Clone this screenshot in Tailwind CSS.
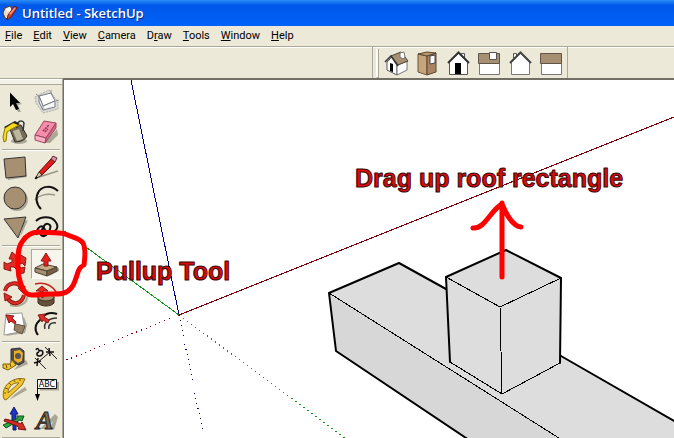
<!DOCTYPE html>
<html lang="en">

<head>
    <meta charset="UTF-8" />
    <meta name="viewport" content="width=device-width, initial-scale=1.0" />
    <title>Untitled - SketchUp</title>
    <script src="https://cdn.jsdelivr.net/npm/@tailwindcss/browser@4"></script>
</head>

<body>
    <div class="relative flex h-screen flex-col overflow-hidden bg-[#ece9d8] font-[Roboto,sans-serif] text-black">
        <!-- Title bar -->
        <header class="flex h-[26px] shrink-0 items-center gap-1 bg-linear-to-b from-[#2b8cfb] via-[#0058e8] via-20% to-[#0062fa] pl-0.5">
            <svg class="h-4 w-4" viewBox="0 0 16 16">
                <path d="M1 8 3 3 8 1 10 4 6 14 3 13Z" fill="#f2dcc0" stroke="#5b3a30" />
                <path d="M4 4 8 2 9 5 5 7Z" fill="#fff" />
                <path d="M5 15 6 10 13 1 15 3 9 12Z" fill="#d8432a" stroke="#6d1710" />
                <path d="M8 9 13 3" stroke="#ff9a7a" stroke-width="1.5" />
            </svg>
            <h1 class="font-['Open_Sans',sans-serif] text-[13px] leading-5 font-semibold text-white [text-shadow:1px_1px_#0a2a8c]">Untitled - SketchUp</h1>
        </header>

        <!-- Menu -->
        <nav class="flex h-5 shrink-0 items-center gap-[11px] pl-[5px] text-[11px] leading-4">
            <button><u>F</u>ile</button>
            <button><u>E</u>dit</button>
            <button><u>V</u>iew</button>
            <button><u>C</u>amera</button>
            <button>D<u>r</u>aw</button>
            <button><u>T</u>ools</button>
            <button><u>W</u>indow</button>
            <button><u>H</u>elp</button>
        </nav>

        <!-- Views toolbar -->
        <div class="flex h-8 shrink-0 border-t border-[#aca899] shadow-[inset_0_1px_#fff]">
            <div class="w-[373px] border-r border-[#aca899]"></div>
            <div class="mt-0.5 mr-0.5 ml-[3px] w-[3px] border-r border-b border-[#aca899] border-l border-l-white bg-[#f8f7f1]"></div>
            <div class="flex border-r border-[#aca899]">
                <button aria-label="Iso" class="w-[31px]">
                    <svg class="h-[30px] w-[31px]" viewBox="0 0 31 30">
                        <path d="M6 14 11 9 16 17 16 27 6 22Z" fill="#fff" stroke="#555" />
                        <path d="M16 17 26 13 26 22 16 27Z" fill="#fff" stroke="#777" />
                        <path d="M9 15 12 16 12 24 9 23Z" />
                        <path d="M10 8 20 4 27 13 17 17Z" fill="#a78f72" stroke="#4a4238" />
                        <path d="M4 14 10 8 17 18" fill="none" stroke="#333" stroke-width="1.500" />
                        <path d="M19 5 23 4 24 9 22 11 19 9Z" fill="#fff" stroke="#777" />
                    </svg>
                </button>
                <button aria-label="Top" class="w-[31px]">
                    <svg class="h-[30px] w-[31px]" viewBox="0 0 31 30">
                        <path d="M6 6 15 8 15 27 6 24Z" fill="#c7a47b" stroke="#6b5439" />
                        <path d="M15 8 24 5 24 24 15 27Z" fill="#a78563" stroke="#5a4630" />
                        <path d="M6 6 15 4 24 5 15 8Z" fill="#b8966f" stroke="#5a4630" />
                        <path d="M18 8 23 7 23 15 18 16Z" fill="#fff" stroke="#444" />
                    </svg>
                </button>
                <button aria-label="Front" class="w-[31px]">
                    <svg class="h-[30px] w-[31px]" viewBox="0 0 31 30">
                        <path d="M18.500 11V5.500H21.500V13Z" fill="#fff" stroke="#555" />
                        <path d="M6.500 14 15.500 5 24.500 14V26.500H6.500Z" fill="#fff" stroke="#555" />
                        <path d="M5 15 15.500 4.500 26 15" fill="none" stroke="#333" stroke-width="2" />
                        <path d="M12 15H18V26H12Z" />
                    </svg>
                </button>
                <button aria-label="Right" class="w-[31px]">
                    <svg class="h-[30px] w-[31px]" viewBox="0 0 31 30">
                        <path d="M5.500 14.500H25.500V26.500H5.500Z" fill="#fff" stroke="#777" />
                        <path d="M4.500 5.500H25.500V15.500H4.500Z" fill="#a78f72" stroke="#5f5548" />
                        <path d="M15.500 4.500H22.500V11.500H15.500Z" fill="#fff" stroke="#555" />
                    </svg>
                </button>
                <button aria-label="Back" class="w-[31px]">
                    <svg class="h-[30px] w-[31px]" viewBox="0 0 31 30">
                        <path d="M8.500 13V5.500H11.500V11Z" fill="#fff" stroke="#555" />
                        <path d="M6.500 14 15.500 5 24.500 14V26.500H6.500Z" fill="#fff" stroke="#777" />
                        <path d="M5 15 15.500 4.500 26 15" fill="none" stroke="#444" stroke-width="2" />
                    </svg>
                </button>
                <button aria-label="Left" class="w-[31px]">
                    <svg class="h-[30px] w-[31px]" viewBox="0 0 31 30">
                        <path d="M5.500 14.500H25.500V26.500H5.500Z" fill="#fff" stroke="#777" />
                        <path d="M4.500 5.500H25.500V15.500H4.500Z" fill="#a78f72" stroke="#5f5548" />
                    </svg>
                </button>
            </div>
        </div>

        <div class="flex min-h-0 flex-1">
            <!-- Tools -->
            <aside class="flex w-[63px] shrink-0 flex-col border-t border-r border-[#aca899]">
                <div class="h-[6px] shrink-0 border-t border-b border-t-white border-b-[#aca899] bg-[#f4f2e8]"></div>
                <div class="grid shrink-0 grid-cols-2 pt-0.5">
                    <button aria-label="Select" class="h-[30px]">
                        <svg class="h-[30px] w-[31px]" viewBox="0 0 31 30">
                            <path d="M14 10 22 17 18 18 21 25 18 25 14 18Z" fill="#aaa797" />
                            <path d="M10 5.500V20L13 17 16 23 19 22 16 16H20Z" />
                        </svg>
                    </button>
                    <button aria-label="Make Component" class="h-[30px]">
                        <svg class="h-[30px] w-[31px]" viewBox="0 0 31 30">
                            <path d="M4 10 18 3 27 15 27 22 12 26 5 16Z" fill="#dddbd5" stroke="#aaa9a5" stroke-dasharray="2 1" />
                            <path d="M8 9 20 6 24 14 12 19Z" fill="#fff" stroke="#777785" />
                            <path d="M8 9V15L12 23 24 20V14L12 19Z" fill="#f7f7fa" stroke="#777785" />
                            <path d="M12 19V23M5 7 9 10M20 3 20 6M25 14 28 13" stroke="#8d8d98" />
                        </svg>
                    </button>
                    <button aria-label="Paint Bucket" class="h-[30px]">
                        <svg class="h-[30px] w-[31px]" viewBox="0 0 31 30">
                            <ellipse cx="19" cy="24" rx="8" ry="3" fill="#aaa797" />
                            <path d="M9 10 21 8 27 19 Q24 25 15 25Z" fill="#756d58" stroke="#2e2b23" />
                            <path d="M13 14 19 12 23 22 17 24Z" fill="#bdb79f" />
                            <path d="M17 11C16 4 22 2 24 6L23 14" fill="none" stroke="#333" stroke-width="1.500" />
                            <path d="M5 11 14 5 19 8 10 13 7 15 6 24 4 25 3 20Z" fill="#f6dc17" stroke="#8a7910" />
                            <path d="M4 10 15 4 20 7 18 8 13 6 5 11Z" fill="#292619" />
                        </svg>
                    </button>
                    <button aria-label="Eraser" class="h-[30px]">
                        <svg class="h-[30px] w-[31px]" viewBox="0 0 31 30">
                            <path d="M13 26 26 12 27 18 19 26Z" fill="#aaa797" />
                            <path d="M4 18 13 4 25 6 15 21Z" fill="#f58eaa" stroke="#9c4561" />
                            <path d="M4 18 15 21 14 26 4 23Z" fill="#fbb0c4" stroke="#9c4561" />
                            <path d="M15 21 25 6V11L14 26Z" fill="#d76786" stroke="#9c4561" />
                            <path d="M12 14 18 8M14 15 17 12" stroke="#8e2c4b" stroke-width="1.500" stroke-dasharray="2 1" />
                        </svg>
                    </button>
                </div>
                <hr class="mx-0.5 my-0.5 shrink-0 border-[#aca899] shadow-[0_1px_#fff]" />
                <div class="grid shrink-0 grid-cols-2 pt-px">
                    <button aria-label="Rectangle" class="h-[30px]">
                        <svg class="h-[30px] w-[31px]" viewBox="0 0 31 30">
                            <path d="M8 27 27 24 26 21 7 24Z" fill="#aaa797" />
                            <path d="M4 6 25 4 26 23 6 25Z" fill="#a78f72" stroke="#333" />
                        </svg>
                    </button>
                    <button aria-label="Line" class="h-[30px]">
                        <svg class="h-[30px] w-[31px]" viewBox="0 0 31 30">
                            <path d="M5 25 27 18" stroke="#999789" stroke-width="1.500" />
                            <path d="M8 19 20 6 24 9 11 22Z" fill="#e01c1c" stroke="#6d0d0d" />
                            <path d="M20 6 22 3 26 5 24 9Z" fill="#dd8d9d" stroke="#5e3038" />
                            <path d="M8 19 11 22 4 26Z" fill="#e6c89b" stroke="#333" />
                            <path d="M4 26 5 23 7 25Z" />
                        </svg>
                    </button>
                    <button aria-label="Circle" class="h-[30px]">
                        <svg class="h-[30px] w-[31px]" viewBox="0 0 31 30">
                            <circle cx="17" cy="17" r="11" fill="#aaa797" />
                            <circle cx="15" cy="15" r="11" fill="#a78f72" stroke="#333" />
                        </svg>
                    </button>
                    <button aria-label="Arc" class="h-[30px]">
                        <svg class="h-[30px] w-[31px]" viewBox="0 0 31 30">
                            <path d="M4 17C8 12 16 10 24 12" fill="none" stroke="#999789" stroke-width="1.500" />
                            <path d="M27 8C20 2 12 3 8 8C4 14 5 21 10 26" fill="none" stroke="#111" stroke-width="2" />
                        </svg>
                    </button>
                    <button aria-label="Polygon" class="h-[30px]">
                        <svg class="h-[30px] w-[31px]" viewBox="0 0 31 30">
                            <path d="M20 25 28 7 24 8Z" fill="#aaa797" />
                            <path d="M4 6 26 4 18 25Z" fill="#a78f72" stroke="#333" />
                        </svg>
                    </button>
                    <button aria-label="Freehand" class="h-[30px]">
                        <svg class="h-[30px] w-[31px]" viewBox="0 0 31 30">
                            <path d="M5 8C10 3 20 3 24 8C28 13 27 18 20 19C15 19 12 16 13 13C15 9 21 11 19 16C18 21 13 25 10 22C8 19 12 17 12 14C10 12 5 15 6 22" fill="none" stroke="#111" stroke-width="2" />
                        </svg>
                    </button>
                </div>
                <hr class="mx-0.5 my-0.5 shrink-0 border-[#aca899] shadow-[0_1px_#fff]" />
                <div class="grid shrink-0 grid-cols-2 pt-px">
                    <button aria-label="Move" class="h-[30px]">
                        <svg class="h-[30px] w-[31px]" viewBox="0 0 31 30">
                            <path d="M12 3 18 8 16 9 17 12 20 11 19 5 26 9 25 17 22 14 18 16 21 19 25 18 24 24 17 25 18 22 14 18 10 18 11 22 4 20 4 13 7 15 12 13 12 10 9 10Z" fill="#df2a25" stroke="#8b1b16" />
                        </svg>
                    </button>
                    <button aria-label="Push/Pull" class="h-[30px] border border-t-[#aca899] border-r-white border-b-white border-l-[#aca899] bg-[#f6f5ee]">
                        <svg class="-m-px h-[30px] w-[31px]" viewBox="0 0 31 30">
                            <path d="M18 27 28 22 28 19 22 20Z" fill="#aaa797" />
                            <path d="M4 19 12 15 26 18 16 22Z" fill="#c5ab87" stroke="#4d4130" />
                            <path d="M4 19 16 22V27L4 23Z" fill="#a78f72" stroke="#4d4130" />
                            <path d="M16 22 26 18V22L16 27Z" fill="#766247" stroke="#4d4130" />
                            <path d="M15 4 20 12H17V17H13V12H10Z" fill="#e5201b" stroke="#8d1512" />
                        </svg>
                    </button>
                    <button aria-label="Rotate" class="h-[30px]">
                        <svg class="h-[30px] w-[31px]" viewBox="0 0 31 30">
                            <path d="M10 26C20 29 27 24 27 18" fill="none" stroke="#aaa797" stroke-width="2" />
                            <path d="M5 12C7 3 18 2 22 9M24 16C22 25 13 27 8 20" fill="none" stroke="#8b1b16" stroke-width="4" />
                            <path d="M5 12C7 3 18 2 22 9M24 16C22 25 13 27 8 20" fill="none" stroke="#e22b26" stroke-width="2" />
                            <path d="M18 9 25 7 24 15ZM4 14 12 18 5 22Z" fill="#e22b26" stroke="#8b1b16" />
                        </svg>
                    </button>
                    <button aria-label="Follow Me" class="h-[30px]">
                        <svg class="h-[30px] w-[31px]" viewBox="0 0 31 30">
                            <path d="M7 18V24C10 28 20 28 23 24V18Z" fill="#655139" stroke="#3b3022" />
                            <ellipse cx="15" cy="18" rx="8" ry="4" fill="#a78f72" stroke="#3b3022" />
                            <path d="M4 5C15 2 23 8 26 15" fill="none" stroke="#c3241f" stroke-width="1.500" />
                            <path d="M12 19V12H17L11 7 5 12H9V17Z" fill="#e22b26" stroke="#8b1b16" />
                        </svg>
                    </button>
                    <button aria-label="Scale" class="h-[30px]">
                        <svg class="h-[30px] w-[31px]" viewBox="0 0 31 30">
                            <path d="M6 27 25 24 27 16 24 8Z" fill="#aaa797" />
                            <path d="M6 5 22 4 25 22 4 26Z" fill="#fff" stroke="#999" />
                            <path d="M15 15 25 17 22 25 14 21Z" fill="#968165" stroke="#5c4f3d" />
                            <path d="M15 15 11 12 9 14 6 6 14 7 12 9 16 13Z" fill="#e22b26" stroke="#8b1b16" />
                        </svg>
                    </button>
                    <button aria-label="Offset" class="h-[30px]">
                        <svg class="h-[30px] w-[31px]" viewBox="0 0 31 30">
                            <path d="M26 5C18 2 12 6 9 11C4 15 3 21 7 26" fill="none" stroke="#111" stroke-width="2" />
                            <path d="M26 9C18 9 12 14 14 20M25 14C20 13 17 16 18 20" fill="none" stroke="#333" stroke-width="1.500" />
                            <path d="M17 14 12 11 11 13 7 6 14 5 13 8 18 11Z" fill="#e22b26" stroke="#8b1b16" />
                        </svg>
                    </button>
                </div>
                <hr class="mx-0.5 my-0.5 shrink-0 border-[#aca899] shadow-[0_1px_#fff]" />
                <div class="grid shrink-0 grid-cols-2 pt-px">
                    <button aria-label="Tape Measure" class="h-[30px]">
                        <svg class="h-[30px] w-[31px]" viewBox="0 0 31 30">
                            <path d="M14 25 28 19 26 15 17 21Z" fill="#aaa797" />
                            <path d="M11 4 20 3 24 6 24 17 19 20 11 17Z" fill="#4e4e4e" stroke="#333" />
                            <path d="M14 6 20 5 23 8 22 16 18 18 14 15Z" fill="#eaae27" />
                            <circle cx="18" cy="11" r="3" fill="#555" />
                            <path d="M12 15 10 19 3 19V23L8 25 16 20Z" fill="#f3c52c" stroke="#7b5c0b" />
                            <path d="M6 20 7 23M10 19 11 22" stroke="#6b500a" />
                        </svg>
                    </button>
                    <button aria-label="Dimension" class="h-[30px]">
                        <svg class="h-[30px] w-[31px]" viewBox="0 0 31 30">
                            <path d="M7 17 19 7M14 2 26 14M4 13 15 24" stroke="#222" />
                            <path d="M15 7H23M18 3 19 11M3 18 10 16M7 13 6 21" stroke="#111" stroke-width="1.500" />
                            <path d="M5 5C6 2 8 4 8 6C13 4 13 10 9 11C5 11 5 8 8 7" fill="none" stroke="#111" stroke-width="1.500" />
                        </svg>
                    </button>
                    <button aria-label="Protractor" class="h-[30px]">
                        <svg class="h-[30px] w-[31px]" viewBox="0 0 31 30">
                            <path d="M9 25 27 15 25 12 15 19Z" fill="#aaa797" />
                            <path d="M4 24C0 12 12 1 25 4L22 10 6 25Z" fill="#f2c52b" stroke="#8a6c14" />
                            <path d="M8 18C8 12 13 7 19 8Z" fill="#ece9d8" stroke="#8a6c14" />
                            <path d="M4 18 6 18M5 13 8 14M9 8 11 10M14 5 15 7M20 4 20 6" stroke="#725911" />
                        </svg>
                    </button>
                    <button aria-label="Text" class="h-[30px]">
                        <svg class="h-[30px] w-[31px]" viewBox="0 0 31 30">
                            <path d="M9 14.500H27V7" fill="none" stroke="#aaa797" stroke-width="2" />
                            <path d="M6.500 22V4.500H25.500V13.500H6.500" fill="#fff" stroke="#111" />
                            <path d="M4 19H9L6.500 26Z" />
                            <text x="16" y="12" text-anchor="middle" font-family="DejaVu Sans" font-size="8">ABC</text>
                        </svg>
                    </button>
                    <button aria-label="Axes" class="h-[30px]">
                        <svg class="h-[30px] w-[31px]" viewBox="0 0 31 30">
                            <path d="M13 17H16V25H13ZM12 16V9H10L14 2 18 9H16V17Z" fill="#1b35c9" stroke="#101a66" />
                            <path d="M3 20 12 16 18 13 17 11 24 11 22 16 20 15 6 23Z" fill="#2ca542" stroke="#155122" />
                            <path d="M5 14 14 16 21 19 22 17 26 25 18 24 19 22 12 19 4 16Z" fill="#d92b28" stroke="#6e1411" />
                        </svg>
                    </button>
                    <button aria-label="3D Text" class="h-[30px]">
                        <svg class="h-[30px] w-[31px] overflow-visible" viewBox="0 0 31 30">
                            <path d="M9 24 24 9 27 12 23 25 19 23 22 16 14 24Z" fill="#aaa797" />
                            <text x="5" y="24" font-family="Liberation Serif" font-size="26" font-style="italic" font-weight="bold" fill="#776a56" stroke="#2b251c">A</text>
                        </svg>
                    </button>
                </div>
                <hr class="mx-0.5 my-0.5 shrink-0 border-[#aca899] shadow-[0_1px_#fff]" />
            </aside>

            <!-- Model -->
            <main class="min-w-0 flex-1 border-t-2 border-l border-[#716f64] bg-white">
                <svg class="h-full w-full" viewBox="64 80 610 358" preserveAspectRatio="xMinYMin slice" fill="none" stroke-linejoin="round" stroke-linecap="round">
                    <!-- axes -->
                    <g shape-rendering="crispEdges">
                        <path d="M179 315 131 80" stroke="#000080" />
                        <path d="M179 315 674 117" stroke="#80000c" />
                        <path d="M179 315 64 231" stroke="#149414" />
                        <path d="M179 315 64 361" stroke="#80000c" stroke-dasharray="1 4" stroke-linecap="butt" />
                        <path d="M179 315 345 438" stroke="#149414" stroke-dasharray="1 4" stroke-linecap="butt" />
                        <path d="M179 315 204 438" stroke="#000080" stroke-dasharray="1 4" stroke-linecap="butt" />
                    </g>
                    <!-- base block -->
                    <path d="M329 293 399 263 674 421V445H558Z" fill="#ddd" />
                    <path d="M329 293 558 438V445H478L336 351Z" fill="#d7d7d7" />
                    <path d="M329 293 570 445" stroke="#000" shape-rendering="crispEdges" />
                    <path d="M478 446 336 351 329 293 399 263 446 289M561 356 674 421" stroke="#000" stroke-width="2" />
                    <!-- raised block -->
                    <path d="M446 277 506 250 561 278 560 363 502 394 450 362Z" fill="#ddd" />
                    <path d="M446 277 500 307 561 278M500 307 502 394M450 362 502 394 560 363" stroke="#000" shape-rendering="crispEdges" />
                    <path d="M450 362 446 277 506 250 561 278 560 363" stroke="#000" stroke-width="2" />
                    <!-- notes -->
                    <path d="M502 277V203M473 228C485 229 490 211 502 204C506 214 513 226 521 227" stroke="#f00" stroke-width="5" />
                    <g class="font-['Liberation_Sans',sans-serif] text-[25px] font-bold" fill="#d80c0c" stroke="#3a0808">
                        <text x="355" y="187">Drag up roof rectangle</text>
                        <text x="96" y="280">Pullup Tool</text>
                    </g>
                </svg>
            </main>
        </div>

        <!-- Ring round the Push/Pull tool -->
        <svg class="pointer-events-none absolute top-[228px] left-[14px] h-[72px] w-[76px]" viewBox="14 228 76 72" fill="none">
            <path d="M84 265C85 258 86 249 83 243C80 238 72 237 65 234C58 232 46 233 39 232C30 232 25 237 22 242C17 249 18 260 18 268C18 278 22 289 26 293C30 297 40 294 49 294C56 294 63 295 68 291C73 287 74 284 76 278C78 273 78 269 81 267" stroke="#f00" stroke-width="5" stroke-linecap="round" stroke-linejoin="round" />
        </svg>
    </div>
</body>

</html>
